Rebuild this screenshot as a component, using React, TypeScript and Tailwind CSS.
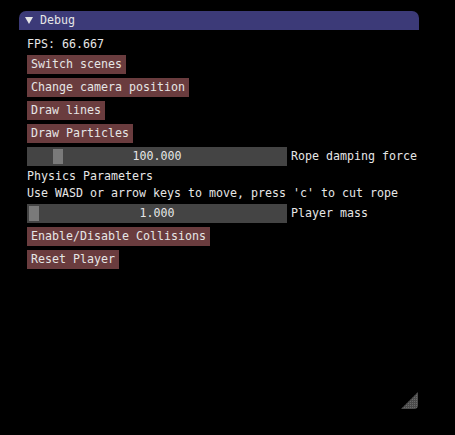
import React from "react";

function Btn({ label }: { label: string }) {
  return (
    <div className="self-start h-[19px] px-[4px] bg-[#6a3c3e] flex items-center whitespace-pre">
      {label}
    </div>
  );
}

function Slider({ value, grab, label }: { value: string; grab: number; label: string }) {
  return (
    <div className="flex items-center gap-[4px] h-[19px] whitespace-pre">
      <div className="relative w-[260px] h-[19px] bg-[#444444] flex items-center justify-center shrink-0">
        <div
          className="absolute top-[2px] w-[10px] h-[15px] bg-[#7a7a7a]"
          style={{ left: grab }}
        />
        <span className="relative">{value}</span>
      </div>
      <span>{label}</span>
    </div>
  );
}

export default function App() {
  return (
    <div className="w-[455px] h-[435px] bg-black pt-[11px] pl-[19px] font-['DejaVu_Sans_Mono',monospace] text-[11.63px] leading-[13px] text-[#e6e6e6] overflow-hidden">
      <div className="relative w-[400px] h-[399px] flex flex-col">
        <div className="h-[19px] bg-[#3c3a78] rounded-t-[7px] flex items-center">
          <svg width="8" height="7" viewBox="0 0 8 7" className="ml-[6px]">
            <polygon points="0,0 8,0 4,7" fill="#e6e6e6" />
          </svg>
          <span className="ml-[7px]">Debug</span>
        </div>
        <div className="px-[8px] pt-[8px] flex flex-col gap-[4px]">
          <div className="h-[13px] whitespace-pre">FPS: 66.667</div>
          <Btn label="Switch scenes" />
          <Btn label="Change camera position" />
          <Btn label="Draw lines" />
          <Btn label="Draw Particles" />
          <Slider value="100.000" grab={26} label="Rope damping force" />
          <div className="h-[13px] whitespace-pre">Physics Parameters</div>
          <div className="h-[13px] whitespace-pre">Use WASD or arrow keys to move, press 'c' to cut rope</div>
          <Slider value="1.000" grab={2} label="Player mass" />
          <Btn label="Enable/Disable Collisions" />
          <Btn label="Reset Player" />
        </div>
        <svg
          width="19"
          height="19"
          viewBox="0 0 19 19"
          className="absolute right-0 bottom-0"
        >
          <defs>
            <pattern id="chk" width="2" height="2" patternUnits="userSpaceOnUse">
              <rect width="2" height="2" fill="#4a4a4a" />
              <rect width="1" height="1" fill="#6a6a6a" />
            </pattern>
          </defs>
          <path d="M18 1 L18 14 Q18 18 14 18 L1 18 Z" fill="url(#chk)" />
        </svg>
      </div>
    </div>
  );
}
